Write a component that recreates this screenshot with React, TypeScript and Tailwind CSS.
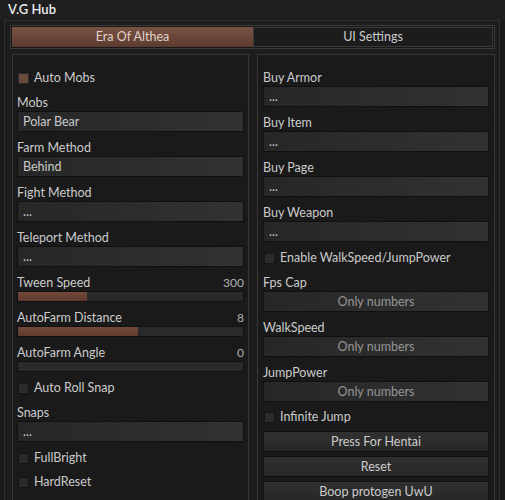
const font = { fontFamily: 'Lato, "Noto Sans", sans-serif' };

const Check = ({ label, on = false, h = 'h-[25px]' }: { label: string; on?: boolean; h?: string }) => (
  <div className={`flex items-center gap-[5px] pl-[1px] ${h}`}>
    <div
      className={
        on
          ? 'w-[11px] h-[11px] border border-[#2a2a2a] bg-[#6b4a3e]'
          : 'w-[11px] h-[11px] border border-[#141414] bg-[#2b2b2b]'
      }
    />
    <span>{label}</span>
  </div>
);

const Input = ({ label, value = '...', center = false }: { label: string; value?: string; center?: boolean }) => (
  <div className="mb-[4px]">
    <div className="h-[20px] flex items-end leading-[16px]">{label}</div>
    <div
      className={`h-[21px] pt-[1px] border border-[#101010] bg-gradient-to-r from-[#272727] to-[#323232] flex items-center ${
        center ? 'justify-center text-[#959595]' : 'pl-[5px]'
      }`}
    >
      {value}
    </div>
  </div>
);

const Slider = ({ label, value, pct }: { label: string; value: string; pct: number }) => (
  <div className="mb-[4px]">
    <div className="h-[20px] flex items-end justify-between leading-[16px]">
      <span>{label}</span>
      <span className="text-[#b0b0b0] text-[12px]">{value}</span>
    </div>
    <div className="h-[11px] border border-[#101010] bg-[#2a2a2a]">
      <div className="h-full bg-gradient-to-b from-[#74493a] to-[#5e3b2f]" style={{ width: `${pct}%` }} />
    </div>
  </div>
);

const Button = ({ label }: { label: string }) => (
  <div className="h-[21px] pt-[1px] mb-[4px] border border-[#101010] bg-gradient-to-b from-[#303030] to-[#282828] flex items-center justify-center">
    {label}
  </div>
);

export default function App() {
  return (
    <div style={font} className="w-[505px] h-[500px] overflow-hidden bg-[#1b1b1b] text-[12.5px] text-[#cbcbcb]">
      <div className="h-[20px] flex items-center pl-[8px] text-[13px] font-semibold text-[#ececec] bg-[#1f1f1f]">
        V.G Hub
      </div>
      <div className="ml-[4px] w-[496px] h-[480px] border-x border-t border-[#2f2f2f] bg-[#1d1d1d] pt-[4px]">
        <div className="ml-[5px] w-[485px] h-[24px] border border-[#3a3a3a] bg-[#181818] p-[1px] flex">
          <div className="w-[241px] h-full bg-gradient-to-b from-[#7a5243] to-[#5c3b2f] flex items-center justify-center text-[#e0d2cb]">
            Era Of Althea
          </div>
          <div className="flex-1 h-full border border-[#3a3a3a] bg-[#1c1c1c] flex items-center justify-center">
            UI Settings
          </div>
        </div>
        <div className="flex gap-[8px] ml-[7px] mt-[5px]">
          <div className="w-[237px] h-[450px] border border-[#363636] bg-[#1a1a1a] pt-[10px] px-[4px]">
            <Check label="Auto Mobs" on h="h-[26px]" />
            <Input label="Mobs" value="Polar Bear" />
            <Input label="Farm Method" value="Behind" />
            <Input label="Fight Method" />
            <Input label="Teleport Method" />
            <Slider label="Tween Speed" value="300" pct={30.5} />
            <Slider label="AutoFarm Distance" value="8" pct={53.5} />
            <Slider label="AutoFarm Angle" value="0" pct={0} />
            <Check label="Auto Roll Snap" />
            <Input label="Snaps" />
            <Check label="FullBright" h="h-[24px]" />
            <Check label="HardReset" h="h-[24px]" />
          </div>
          <div className="w-[238px] h-[450px] border border-[#363636] bg-[#1a1a1a] pt-[11px] px-[5px]">
            <Input label="Buy Armor" />
            <Input label="Buy Item" />
            <Input label="Buy Page" />
            <Input label="Buy Weapon" />
            <Check label="Enable WalkSpeed/JumpPower" />
            <Input label="Fps Cap" value="Only numbers" center />
            <Input label="WalkSpeed" value="Only numbers" center />
            <Input label="JumpPower" value="Only numbers" center />
            <Check label="Infinite Jump" h="h-[22px] mb-[3px]" />
            <Button label="Press For Hentai" />
            <Button label="Reset" />
            <Button label="Boop protogen UwU" />
          </div>
        </div>
      </div>
    </div>
  );
}
